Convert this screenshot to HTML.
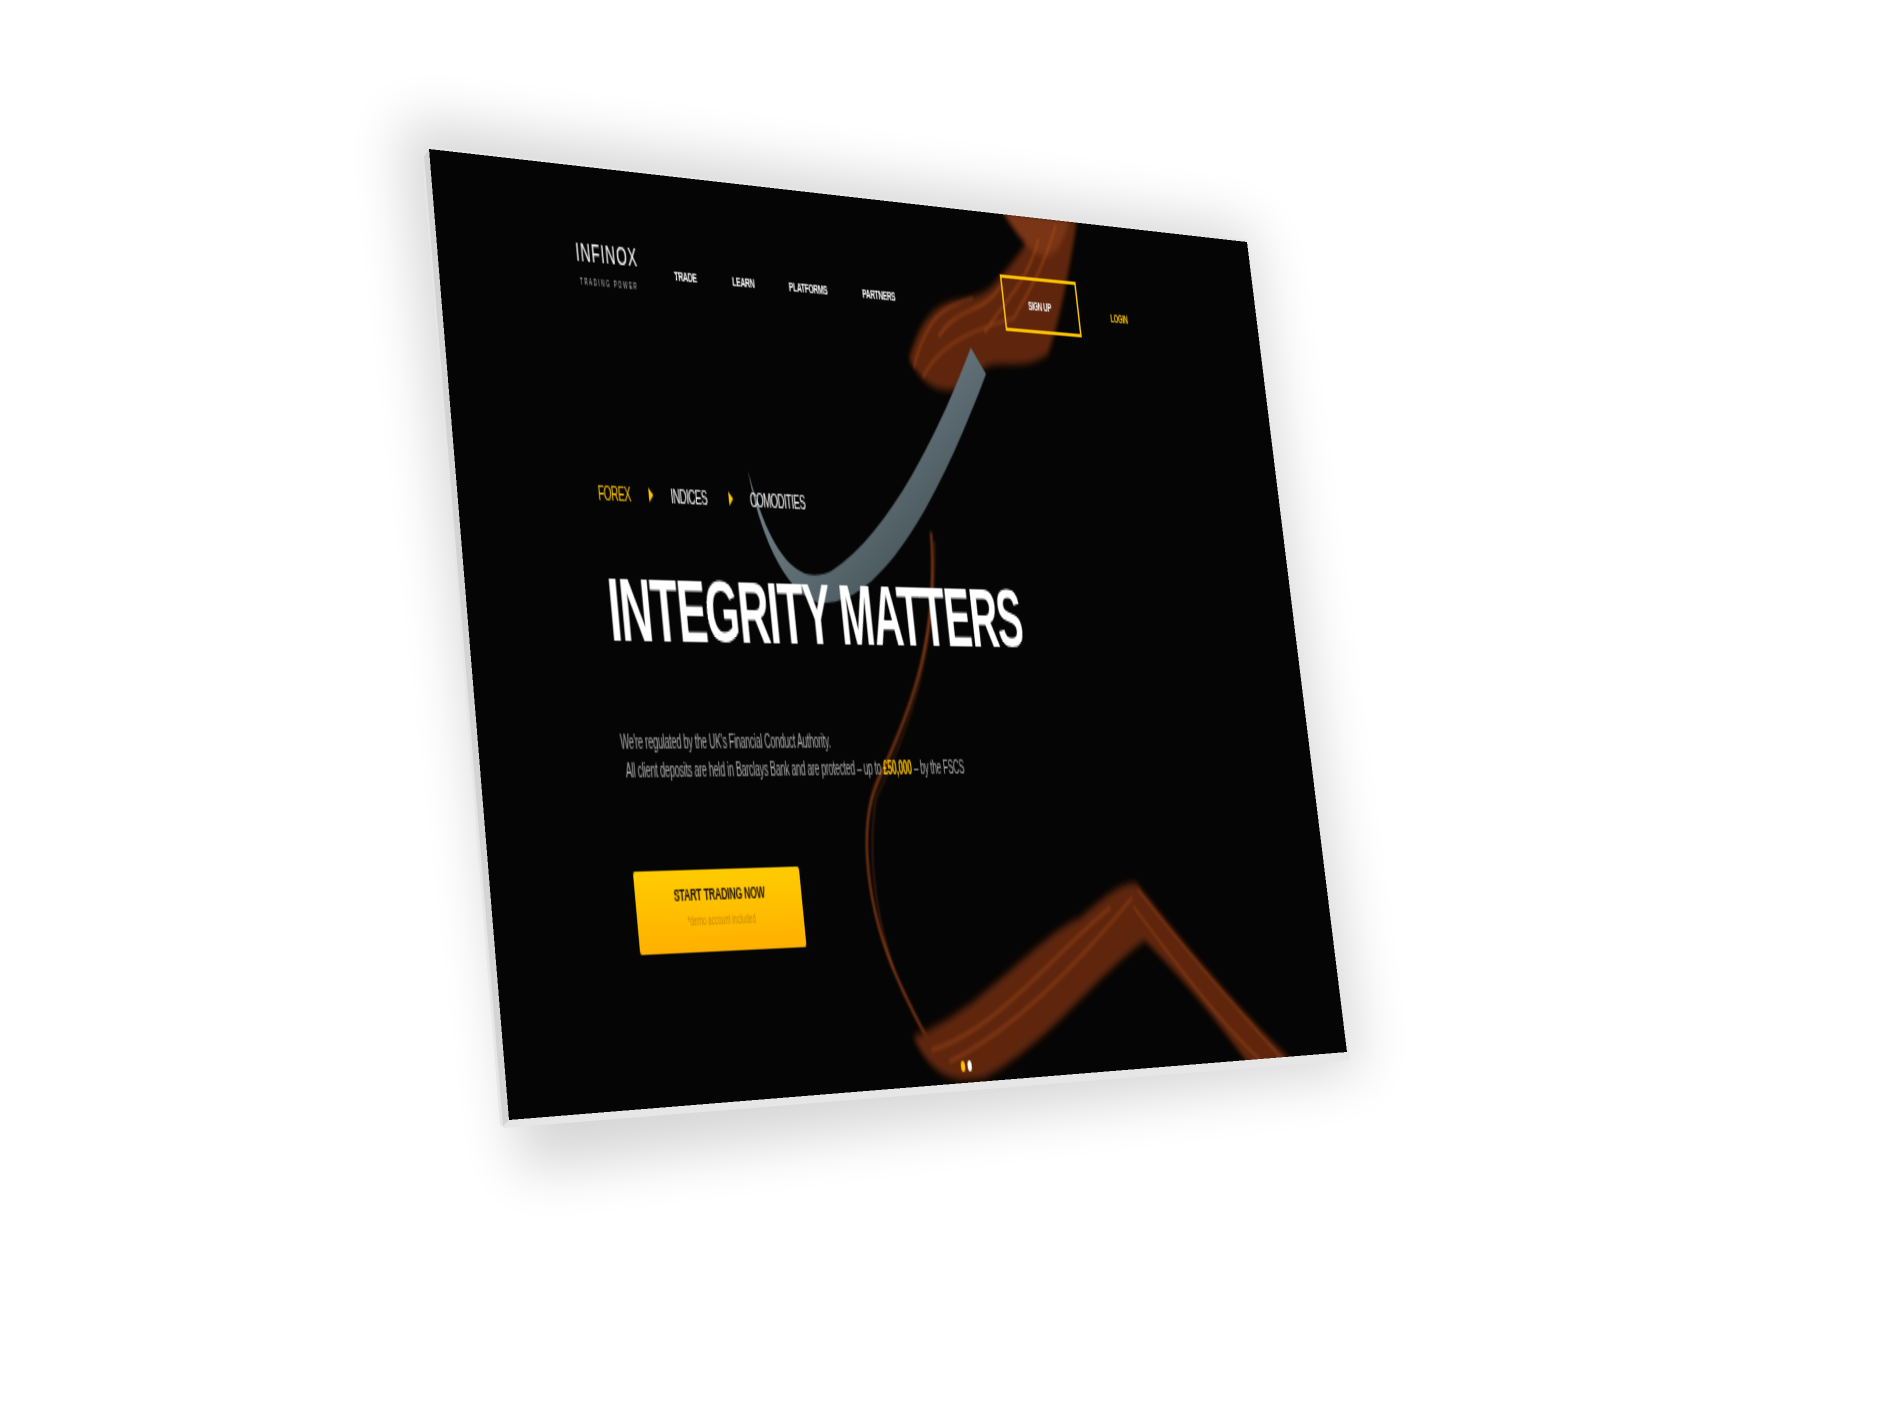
<!DOCTYPE html>
<html><head><meta charset="utf-8">
<style>
html,body{margin:0;padding:0;width:1890px;height:1417px;background:#fff;overflow:hidden;position:relative;font-family:"Liberation Sans",Arial,sans-serif;}
#bg{position:absolute;left:0;top:0;}
#scr{position:absolute;left:0;top:0;width:1000px;height:500px;background:#050505;transform-origin:0 0;overflow:hidden;}
#scr div{position:absolute;white-space:nowrap;}
.nav{top:52px;font-size:8px;font-weight:bold;color:#fff;letter-spacing:-0.4px;}
.cat{top:174px;font-size:11px;color:#fff;letter-spacing:-0.6px;}
.arr{width:0;height:0;border-top:4.5px solid transparent;border-bottom:4.5px solid transparent;border-left:5px solid #ffc400;top:175px;}
</style></head><body>
<svg id="bg" width="1890" height="1417">
<defs>
<filter id="sh" x="-30%" y="-30%" width="160%" height="160%"><feGaussianBlur stdDeviation="28"/></filter>
</defs>
<polygon points="400,120 1250,230 1360,1070 520,1170" fill="#000" opacity="0.16" filter="url(#sh)"/>
<polygon points="422,154 429,147 1247,240 1350,1055 1349,1060 504,1128 500,1124" fill="#e6e6e6"/>
<polygon points="424,156 429,149 509,1120 503,1126" fill="#d4d4d4"/>
</svg>
<div id="scr">
<svg width="1000" height="500" style="position:absolute;left:0;top:0">
<defs>
<filter id="b2"><feGaussianBlur stdDeviation="2"/></filter>
<filter id="b1"><feGaussianBlur stdDeviation="0.8"/></filter>
<linearGradient id="horn" x1="0" y1="0" x2="1" y2="1"><stop offset="0" stop-color="#8fa2aa"/><stop offset="1" stop-color="#2f3b40"/></linearGradient>
</defs>
<g transform="translate(-38,3)">
<g filter="url(#b2)">
<path d="M560,90 C600,40 640,60 680,40 C720,20 740,5 760,-5 L800,-5 C780,30 760,60 740,80 C700,95 660,80 640,100 C610,110 580,110 560,90Z" fill="#5e250e"/>
<path d="M700,-5 C730,20 760,35 790,-5Z" fill="#7a3414"/>
</g>
<g fill="none" stroke="#b5521f" stroke-width="1.2" opacity="0.8" filter="url(#b1)">
<path d="M565,95 C590,60 620,55 650,50"/><path d="M600,75 C630,55 660,60 690,40"/>
<path d="M660,70 C690,50 720,40 745,10"/><path d="M700,60 C720,45 745,30 770,0"/>
<path d="M575,100 C600,80 640,70 700,60"/>
</g>
<path d="M640,80 C600,120 520,190 440,214 C400,224 370,207 354,160 C360,192 380,226 420,232 C500,236 595,155 656,95Z" fill="url(#horn)"/>
<g fill="none" stroke="#a4461c" filter="url(#b1)">
<path d="M565,190 C560,250 520,290 470,330 C440,355 440,400 470,440 C485,460 492,468 500,474" stroke-width="2"/>
<path d="M568,195 C555,260 515,300 465,340 C448,370 448,410 475,448" stroke-width="1" opacity="0.7"/>
</g>
<g filter="url(#b2)">
<path d="M480,470 C560,460 640,420 700,410 C730,400 760,390 778,392 C820,420 880,460 960,500 L900,500 C860,470 820,445 780,425 C720,440 640,480 560,495 C520,498 495,490 480,470Z" fill="#5e250e"/>
</g>
<g fill="none" stroke="#c25a24" stroke-width="1" opacity="0.8" filter="url(#b1)">
<path d="M500,478 C580,470 660,430 740,405"/><path d="M520,485 C600,470 680,440 770,400"/>
<path d="M778,395 C830,430 880,460 950,500"/><path d="M770,405 C820,440 860,470 920,500"/>
</g>
</g>
</svg>
<div style="left:146px;top:40px;font-size:15px;color:#fff;letter-spacing:1px;">INFINOX</div>
<div style="left:148px;top:62px;font-size:5px;color:#bbb;letter-spacing:1.6px;">TRADING POWER</div>
<div class="nav" style="left:253px">TRADE</div>
<div class="nav" style="left:319px">LEARN</div>
<div class="nav" style="left:385px">PLATFORMS</div>
<div class="nav" style="left:473px">PARTNERS</div>
<div style="left:650px;top:37px;width:96px;height:30px;border:2px solid #ffc400;"></div>
<div class="nav" style="left:683px;top:50px;">SIGN UP</div>
<div class="nav" style="left:792px;top:53px;color:#ffc400;">LOGIN</div>
<div class="cat" style="left:147px;color:#ffc400;">FOREX</div>
<div class="arr" style="left:202px"></div>
<div class="cat" style="left:226px">INDICES</div>
<div class="arr" style="left:291px"></div>
<div class="cat" style="left:315px">COMODITIES</div>
<div style="left:147px;top:214px;font-size:49px;font-weight:bold;color:#fff;letter-spacing:-1.5px;">INTEGRITY MATTERS</div>
<div style="left:147px;top:307px;font-size:10px;color:#aaa;letter-spacing:-0.3px;">We're regulated by the UK's Financial Conduct Authority.</div>
<div style="left:150px;top:322px;font-size:10px;color:#aaa;letter-spacing:-0.3px;">All client deposits are held in Barclays Bank and are protected – up to <b style="color:#ffc400">£50,000</b> – by the FSCS</div>
<div style="left:148px;top:379px;width:182px;height:43px;border-radius:2px;background:linear-gradient(#ffcc00,#ffb000);"></div>
<div style="left:148px;top:387px;width:182px;text-align:center;font-size:9.7px;font-weight:bold;color:#1a1200;letter-spacing:-0.3px;">START TRADING NOW</div>
<div style="left:148px;top:403px;width:182px;text-align:center;font-size:7px;color:#c98a00;">*demo account included</div>
<div style="left:495px;top:488px;width:5px;height:6px;border-radius:50%;background:#ffc400;"></div>
<div style="left:503px;top:488px;width:5px;height:6px;border-radius:50%;background:#fff;"></div>
</div>
<script>
(function(){
var W=1000,H=500;
var x0=429,y0=149,x1=1247,y1=242,x2=1347,y2=1052,x3=509,y3=1120;
var dx1=x1-x2,dx2=x3-x2,dx3=x0-x1+x2-x3,dy1=y1-y2,dy2=y3-y2,dy3=y0-y1+y2-y3;
var den=dx1*dy2-dx2*dy1;
var g=(dx3*dy2-dx2*dy3)/den,h=(dx1*dy3-dx3*dy1)/den;
var a=x1-x0+g*x1,b=x3-x0+h*x3,c=x0,d=y1-y0+g*y1,e=y3-y0+h*y3,f=y0;
var m=[a/W,d/W,0,g/W,b/H,e/H,0,h/H,0,0,1,0,c,f,0,1];
document.getElementById('scr').style.transform='matrix3d('+m.join(',')+')';
})();
</script>
</body></html>
